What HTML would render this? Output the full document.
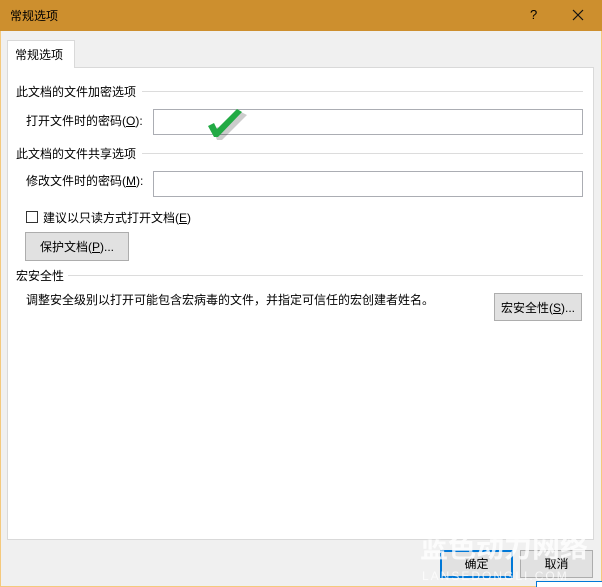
<!DOCTYPE html><html><head><meta charset="utf-8"><style>
*{margin:0;padding:0;box-sizing:border-box}
body{width:602px;height:587px;overflow:hidden;background:#f0f0f0;font-family:"Liberation Sans","Microsoft YaHei","Noto Sans CJK SC",sans-serif;font-size:12px;color:#000;position:relative}
.a{position:absolute}
.t{white-space:nowrap;line-height:14px}
.line{position:absolute;height:1px;background:#dcdcdc}
.inp{position:absolute;background:#fff;border:1px solid #abadb3}
.btn{position:absolute;background:#e1e1e1;border:1px solid #adadad;text-align:center}
u{text-decoration:underline}
</style></head><body>
<div class="a" style="left:0;top:0;width:602px;height:31px;background:#cd8f2e"></div>
<div class="a t" style="left:10px;top:9px;font-size:12px">常规选项</div>
<div class="a t" style="left:530px;top:8px;font-size:13px">?</div>
<svg class="a" style="left:572px;top:9px" width="12" height="12"><path d="M1 1L11 11M11 1L1 11" stroke="#111" stroke-width="1.2"/></svg>
<div class="a" style="left:0;top:31px;width:1px;height:556px;background:#f5c97c"></div>
<div class="a" style="left:601px;top:31px;width:1px;height:556px;background:#f5c97c"></div>
<div class="a" style="left:0;top:586px;width:602px;height:1px;background:#f5c97c"></div>
<div class="a" style="left:7px;top:67px;width:587px;height:473px;background:#fff;border:1px solid #d9d9d9"></div>
<div class="a" style="left:7px;top:40px;width:68px;height:28px;background:#fff;border:1px solid #d9d9d9;border-bottom:none"></div>
<div class="a t" style="left:15px;top:48px">常规选项</div>
<div class="a t" style="left:16px;top:85px">此文档的文件加密选项</div>
<div class="line" style="left:142px;top:91px;width:441px"></div>
<div class="a t" style="left:26px;top:114px">打开文件时的密码(<u>O</u>):</div>
<div class="inp" style="left:153px;top:109px;width:430px;height:26px"></div>
<svg class="a" style="left:204px;top:106px" width="50" height="36"><path d="M6 22 L11 19 L14 25 L34 4 L40 7 L15 32 L10 32 Z" fill="#000" opacity=".2" transform="translate(3,2)"/><path d="M4 20 L10 17 L13 23 L33 3 L38 6 L14 31 L10 31 Z" fill="#22aa44"/></svg>
<div class="a t" style="left:16px;top:147px">此文档的文件共享选项</div>
<div class="line" style="left:142px;top:153px;width:441px"></div>
<div class="a t" style="left:26px;top:174px">修改文件时的密码(<u>M</u>):</div>
<div class="inp" style="left:153px;top:171px;width:430px;height:26px"></div>
<div class="a" style="left:26px;top:211px;width:12px;height:12px;border:1px solid #333;background:#fff"></div>
<div class="a t" style="left:43px;top:211px">建议以只读方式打开文档(<u>E</u>)</div>
<div class="btn" style="left:25px;top:232px;width:104px;height:29px"><span class="t" style="position:relative;top:7px">保护文档(<u>P</u>)...</span></div>
<div class="a t" style="left:16px;top:269px">宏安全性</div>
<div class="line" style="left:68px;top:275px;width:515px"></div>
<div class="a t" style="left:26px;top:293px">调整安全级别以打开可能包含宏病毒的文件，并指定可信任的宏创建者姓名。</div>
<div class="btn" style="left:494px;top:293px;width:88px;height:28px"><span class="t" style="position:relative;top:7px">宏安全性(<u>S</u>)...</span></div>
<div class="btn" style="left:440px;top:550px;width:73px;height:28px;border:2px solid #0078d7"><span class="t" style="position:relative;top:5px">确定</span></div>
<div class="btn" style="left:520px;top:550px;width:73px;height:28px"><span class="t" style="position:relative;top:6px">取消</span></div>
<div class="a" style="left:400px;top:525px;width:202px;height:62px;overflow:hidden">
<div class="a t" style="left:20px;top:8px;font-size:28px;line-height:30px;color:rgba(255,255,255,.8);font-weight:bold">蓝色动力网络</div>
<div class="a t" style="left:22px;top:44px;font-size:12px;color:rgba(255,255,255,.75);letter-spacing:2px">LANSEDONGLI.COM</div>
</div>
<div class="a" style="left:536px;top:581px;width:66px;height:6px;background:#fff;border-top:1px solid #0078d7;border-left:1px solid #0078d7"></div>
</body></html>
